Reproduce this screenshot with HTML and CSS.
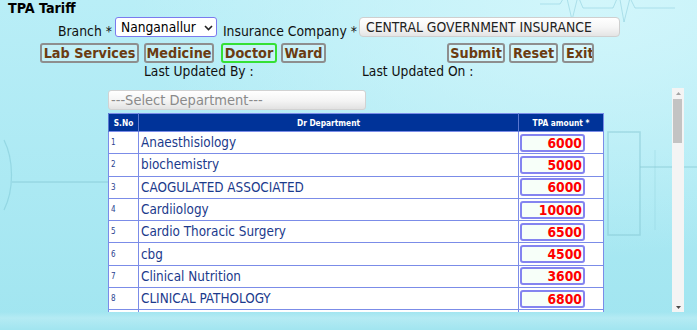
FILE: index.html
```html
<!DOCTYPE html>
<html lang="en">

<head>
    <meta charset="UTF-8">
    <meta name="viewport" content="width=device-width, initial-scale=1.0">
    <title>TPA Tariff</title>
    <link rel="stylesheet" href="styles.css">
</head>

<body>
    <!-- faint hospital artwork behind the form -->
    <svg class="bg-art" width="697" height="330" viewBox="0 0 697 330">
        <path d="M540 4h20l6 -10l6 26l6 -24l5 12h30l6 -14l5 28l6 -24l5 10h40" fill="none" stroke="#7cc6d4" stroke-width="1" opacity="0.45"/>
        <path d="M4 140c10 20 10 50 0 70" fill="none" stroke="#7cc6d4" stroke-width="1.2" opacity="0.5"/>
        <path d="M12 182h96" fill="none" stroke="#79bfcc" stroke-width="1" opacity="0.6"/>
        <path d="M608 132h32v103h-32z" fill="none" stroke="#86c9d4" stroke-width="1.5" opacity="0.55"/>
        <path d="M640 167h57" fill="none" stroke="#86c9d4" stroke-width="1.5" opacity="0.5"/>
        <path d="M655 150v80" fill="none" stroke="#86c9d4" stroke-width="1" opacity="0.35"/>
    </svg>

    <h1 class="title">TPA Tariff</h1>

    <div class="filters">
        <label class="lbl" for="Branch">Branch *</label>
        <span class="select-wrap">
            <select id="Branch" class="branch">
                <option>Nanganallur</option>
            </select>
            <svg class="chev" width="9" height="6" viewBox="0 0 9 6"><path d="M1 1l3.5 3.5L8 1" fill="none" stroke="#222" stroke-width="1.6"/></svg>
        </span>
        <label class="lbl lbl-company" for="Company">Insurance Company *</label>
        <input type="text" id="Company" class="company" value="CENTRAL GOVERNMENT INSURANCE" readonly>
    </div>

    <div class="actions">
        <div class="tabs">
            <button class="btn btn-lab">Lab Services</button>
            <button class="btn btn-med">Medicine</button>
            <button class="btn btn-doc active">Doctor</button>
            <button class="btn btn-ward">Ward</button>
        </div>
        <div class="cmds">
            <button class="btn btn-submit">Submit</button>
            <button class="btn btn-reset">Reset</button>
            <button class="btn btn-exit">Exit</button>
        </div>
    </div>

    <div class="updated">
        <span class="upd-by">Last Updated By :</span>
        <span class="upd-on">Last Updated On :</span>
    </div>

    <div class="grid-wrap">
        <div class="grid-body">
            <div class="dept-select">---Select Department---</div>
            <table class="tariff">
                <thead>
                    <tr>
                        <th class="c-sno">S.No</th>
                        <th class="c-dept">Dr Department</th>
                        <th class="c-amt">TPA amount *</th>
                    </tr>
                </thead>
                <tbody>
                    <tr><td class="c-sno">1</td><td class="c-dept">Anaesthisiology</td><td class="c-amt"><input class="amt" value="6000"></td></tr>
                    <tr><td class="c-sno">2</td><td class="c-dept">biochemistry</td><td class="c-amt"><input class="amt" value="5000"></td></tr>
                    <tr><td class="c-sno">3</td><td class="c-dept">CAOGULATED ASSOCIATED</td><td class="c-amt"><input class="amt" value="6000"></td></tr>
                    <tr><td class="c-sno">4</td><td class="c-dept">Cardiiology</td><td class="c-amt"><input class="amt" value="10000"></td></tr>
                    <tr><td class="c-sno">5</td><td class="c-dept">Cardio Thoracic Surgery</td><td class="c-amt"><input class="amt" value="6500"></td></tr>
                    <tr><td class="c-sno">6</td><td class="c-dept">cbg</td><td class="c-amt"><input class="amt" value="4500"></td></tr>
                    <tr><td class="c-sno">7</td><td class="c-dept">Clinical Nutrition</td><td class="c-amt"><input class="amt" value="3600"></td></tr>
                    <tr><td class="c-sno">8</td><td class="c-dept">CLINICAL PATHOLOGY</td><td class="c-amt"><input class="amt" value="6800"></td></tr>
                    <tr><td class="c-sno">9</td><td class="c-dept">Community Medicine</td><td class="c-amt"><input class="amt" value="4000"></td></tr>
                    <tr><td class="c-sno">10</td><td class="c-dept">Critical Care</td><td class="c-amt"><input class="amt" value="8000"></td></tr>
                </tbody>
            </table>
        </div>
        <div class="vscroll">
            <div class="sb-btn">
                <svg width="5" height="3" viewBox="0 0 5 3"><path d="M0 3L2.5 0L5 3z" fill="#a4a4a4"/></svg>
            </div>
            <div class="sb-thumb"></div>
            <div class="sb-track"></div>
            <div class="sb-btn">
                <svg width="5" height="3" viewBox="0 0 5 3"><path d="M0 0L2.5 3L5 0z" fill="#4a4a4a"/></svg>
            </div>
        </div>
    </div>
</body>

</html>
```

FILE: styles.css
```css
/* TPA Tariff screen */
body {
    position: relative;
    margin: 0;
    height: 330px;
    overflow: hidden;
    font-family: "DejaVu Sans Condensed", "DejaVu Sans", Verdana, sans-serif;
    color: #111;
    background:
        linear-gradient(to bottom, rgba(255, 255, 255, 0) 0, rgba(255, 255, 255, 0) 312px, rgba(255, 255, 255, 0.2) 318px, rgba(255, 255, 255, 0) 330px),
        radial-gradient(ellipse at 85% 0%, #d2f6fb 0, rgba(210, 246, 251, 0) 55%),
        linear-gradient(to bottom, #b9eef7 0, #a1e5f0 100%);
}

.bg-art {
    position: absolute;
    top: 0;
    left: 0;
    z-index: -1;
    pointer-events: none;
}

.title {
    margin: 0;
    padding: 1px 0 0 8px;
    font-size: 14.2px;
    line-height: 14px;
    font-weight: bold;
    color: #000;
}

.filters {
    display: flex;
    align-items: flex-end;
    margin-top: 2px;
    padding-left: 58px;
}

.lbl {
    font-size: 13.8px;
    line-height: 14px;
    margin-bottom: -1px;
    color: #111;
}

.select-wrap {
    position: relative;
    display: block;
    margin-left: 3px;
}

.branch {
    display: block;
    width: 102px;
    height: 20px;
    margin: 0;
    padding: 0 0 0 5px;
    font-family: inherit;
    font-size: 13.7px;
    color: #000;
    background: #fff;
    border: 1px solid #7a7aee;
    border-radius: 3px;
    appearance: none;
    -webkit-appearance: none;
}

.chev {
    position: absolute;
    right: 4px;
    top: 8px;
}

.lbl-company {
    margin-left: 6px;
}

.company {
    width: 261px;
    height: 20px;
    margin: 0 0 0 2px;
    padding: 0 0 0 6px;
    box-sizing: border-box;
    font-family: inherit;
    font-size: 13.8px;
    color: #222;
    border: 1px solid #cfcfcf;
    border-radius: 4px;
    background: linear-gradient(to bottom, #ffffff 0, #f6f6f6 50%, #e4e4e4 100%);
    outline: none;
}

.actions {
    display: flex;
    margin-top: 6px;
    padding-left: 40px;
}

.tabs,
.cmds {
    display: flex;
    gap: 5px;
}

.cmds {
    margin-left: 121px;
    gap: 4px;
}

.btn {
    height: 20px;
    margin: 0;
    padding: 0;
    box-sizing: border-box;
    overflow: hidden;
    white-space: nowrap;
    font-family: inherit;
    font-size: 14.3px;
    font-weight: bold;
    color: #6b3c12;
    background: rgba(255, 255, 255, 0.18);
    border: 2px solid #8e8e8e;
    border-radius: 3px;
    cursor: pointer;
}

.btn.active {
    border-color: #35e035;
}

.btn-lab { width: 99px; }
.btn-med { width: 70px; }
.btn-doc { width: 56px; margin-left: 2px; }
.btn-ward { width: 45px; margin-left: -1px; }
.btn-submit { width: 58px; }
.btn-reset { width: 49px; }
.btn-exit { width: 32px; text-align: left; padding-left: 2px; }

.updated {
    display: flex;
    height: 16px;
    font-size: 13.7px;
    line-height: 16px;
    color: #111;
}

.upd-by {
    margin-left: 144px;
    width: 218px;
}

.grid-wrap {
    display: flex;
    width: 576px;
    height: 224px;
    margin: 9px 0 0 108px;
}

.grid-body {
    flex: 1;
    overflow: hidden;
}

.vscroll {
    display: flex;
    flex-direction: column;
    width: 12px;
    background: #f4f4f4;
}

.sb-btn {
    display: flex;
    align-items: center;
    justify-content: center;
    height: 10px;
}

.sb-thumb {
    height: 44px;
    margin: 1px 2px 0 1px;
    background: #c3c3c3;
}

.sb-track {
    flex: 1;
}

.dept-select {
    width: 258px;
    height: 20px;
    margin-top: 2px;
    padding-left: 2px;
    box-sizing: border-box;
    font-size: 14.5px;
    line-height: 18px;
    color: #8a8a8a;
    border: 1px solid #d2d2d2;
    border-radius: 3px;
    background: linear-gradient(to bottom, #ffffff 0, #f4f4f4 55%, #e2e2e2 100%);
}

.tariff {
    width: 495px;
    margin-top: 3px;
    border-collapse: collapse;
    table-layout: fixed;
    background: #fff;
    border: 1px solid #7b8ce8;
}

.tariff th {
    height: 17px;
    padding: 0;
    font-size: 8.3px;
    font-weight: bold;
    color: #fff;
    background: #003399;
    border-left: 1px solid #5a78d0;
}

.tariff td {
    height: 21.3px;
    padding: 0;
    border: 1px solid #7b8ce8;
    color: #1b3a8c;
}

.c-sno {
    width: 29px;
}

.tariff td.c-sno {
    padding-left: 2px;
    font-size: 8px;
    color: #2a3f8f;
}

.c-dept {
    width: 379px;
}

.tariff td.c-dept {
    padding-left: 2px;
    font-size: 13.4px;
}

.c-amt {
    width: 84px;
}

.tariff td.c-amt {
    padding-left: 1px;
}

.amt {
    display: block;
    width: 65px;
    height: 18px;
    margin: 0;
    padding: 0 1px 0 0;
    box-sizing: border-box;
    font-family: inherit;
    font-size: 13.8px;
    font-weight: bold;
    text-align: right;
    color: #ff0000;
    background: #f7fff9;
    border: 2px solid #8484f0;
    border-radius: 3px;
}
```
